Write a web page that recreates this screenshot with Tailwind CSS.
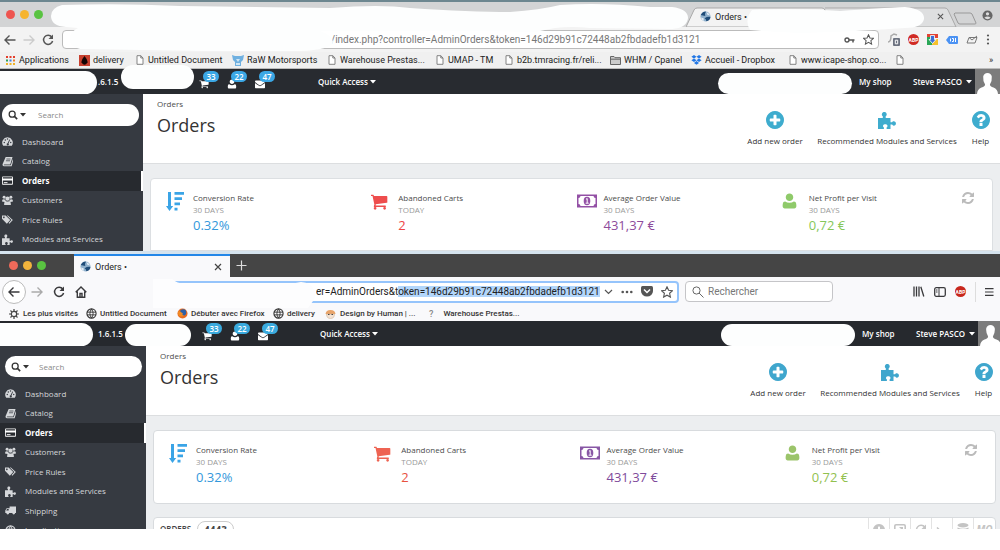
<!DOCTYPE html>
<html lang="en">
<head>
<meta charset="utf-8">
<title>Orders •</title>
<script src="https://cdn.jsdelivr.net/npm/@tailwindcss/browser@4"></script>
</head>
<body class="bg-white font-['Open_Sans','Noto_Sans',sans-serif] text-[8px] leading-3 text-[#4b4b4b]">
<svg class="hidden" aria-hidden="true">
  <symbol id="cart" viewBox="0 0 1792 1792"><path fill="currentColor" d="M704 1536q0 52-38 90t-90 38-90-38-38-90 38-90 90-38 90 38 38 90zm896 0q0 52-38 90t-90 38-90-38-38-90 38-90 90-38 90 38 38 90zm128-1088v512q0 24-16.500 42.500t-40.500 21.500l-1044 122q13 60 13 70 0 16-24 64h920q26 0 45 19t19 45-19 45-45 19h-1024q-26 0-45-19t-19-45q0-11 8-31.500t16-36 21.500-40 15.500-29.500l-177-823h-204q-26 0-45-19t-19-45 19-45 45-19h256q16 0 28.500 6.500t19.500 15.500 13 24.500 8 26 5.500 29.500 4.500 26h1201q26 0 45 19t19 45z"/></symbol>
  <symbol id="user" viewBox="128 64 1536 1664"><path fill="currentColor" d="M1600 1399q0 109-62 187t-150 78h-984q-88 0-150-78t-62-187q0-120 20-230t70-170 170-62q190 150 444 150t444-150q110 0 165 62t75 170 20 230zm-320-887q0 159-112.500 271.500t-271.500 112.500-271.500-112.500-112.500-271.500 112.500-271.500 271.500-112.500 271.500 112.500 112.500 271.500z"/></symbol>
  <symbol id="mail" viewBox="0 0 1792 1792"><path fill="currentColor" d="M1792 710v794q0 66-47 113t-113 47h-1472q-66 0-113-47t-47-113v-794q44 49 101 87 362 246 497 345 57 42 92.500 65.500t94.500 48 110 24.500h2q51 0 110-24.500t94.500-48 92.500-65.500q170-123 498-345 57-39 100-87zm0-294q0 79-49 151t-122 123q-376 261-468 325-10 7-42.500 31t-54 38.500-52 32.500-57.500 27-50 9h-2q-23 0-50-9t-57.500-27-52-32.500-54-38.500-42.500-31q-91-64-262-182.500t-205-142.500q-62-42-117-115.500t-55-136.500q0-78 41.500-130t118.500-52h1472q65 0 112.500 47t47.500 113z"/></symbol>
  <symbol id="plus" viewBox="128 128 1536 1536"><path fill="currentColor" d="M1344 960v-128q0-26-19-45t-45-19h-256v-256q0-26-19-45t-45-19h-128q-26 0-45 19t-19 45v256h-256q-26 0-45 19t-19 45v128q0 26 19 45t45 19h256v256q0 26 19 45t45 19h128q26 0 45-19t19-45v-256h256q26 0 45-19t19-45zm320-64q0 209-103 385.500t-279.500 279.500-385.500 103-385.500-103-279.500-279.500-103-385.500 103-385.500 279.500-279.500 385.500-103 385.500 103 279.500 279.500 103 385.500z"/></symbol>
  <symbol id="help" viewBox="128 128 1536 1536"><path fill="currentColor" d="M1024 1376v-192q0-14-9-23t-23-9h-192q-14 0-23 9t-9 23v192q0 14 9 23t23 9h192q14 0 23-9t9-23zm256-672q0-88-55.500-163t-138.500-116-170-41q-243 0-371 213-15 24 8 42l132 100q7 6 19 6 16 0 25-12 53-68 86-92 34-24 86-24 48 0 85.500 26t37.500 59q0 38-20 61t-68 45q-63 28-115.500 86.500t-52.500 125.500v36q0 14 9 23t23 9h192q14 0 23-9t9-23q0-19 21.500-49.500t54.500-49.500q32-18 49-28.500t46-35 44.500-48 28-60.500 12.500-81zm384 192q0 209-103 385.500t-279.500 279.500-385.500 103-385.500-103-279.500-279.500-103-385.500 103-385.500 279.500-279.500 385.500-103 385.500 103 279.500 279.500 103 385.500z"/></symbol>
  <symbol id="refresh" viewBox="128 128 1536 1536"><path fill="currentColor" d="M1639 1056q0 5-1 7-64 268-268 434.500t-478 166.500q-146 0-282.500-55t-243.500-157l-129 129q-19 19-45 19t-45-19-19-45v-448q0-26 19-45t45-19h448q26 0 45 19t19 45-19 45l-137 137q71 66 161 102t187 36q134 0 250-65t186-179q11-17 53-117 8-23 30-23h192q13 0 22.500 9.500t9.500 22.500zm25-800v448q0 26-19 45t-45 19h-448q-26 0-45-19t-19-45 19-45l138-138q-148-137-349-137-134 0-250 65t-186 179q-11 17-53 117-8 23-30 23h-199q-13 0-22.500-9.500t-9.500-22.500v-7q65-268 270-434.500t480-166.500q146 0 284 55.500t245 156.500l130-129q19-19 45-19t45 19 19 45z"/></symbol>
  <symbol id="puzzle" viewBox="0 0 18 18"><path fill="currentColor" d="M0 7h4.800V5.200C3.600 4.500 3.700 3.500 4 2.700 4.300.300 8.300.300 8.600 2.700c.3.800.2 1.800-.9 2.500V7H12.500v4.200h1.600c.6-1.300 1.700-1.200 2.400-.8 1.900.4 1.900 3.600 0 4-.7.400-1.800.4-2.400-.8h-1.600V18H8.600v-1.400c1-.7 1.100-1.600.7-2.400-.6-1.400-3.500-1.400-4.100 0-.4.8-.3 1.700.7 2.400V18H0z"/></symbol>
  <symbol id="sort" viewBox="0 0 18 19"><path fill="currentColor" d="M2 0h3v14h2.200L3.500 19 0 14h2zM8.500 0H18v2.800H8.500zM8.500 5.300h7.500v2.800H8.500zM8.500 10.500H14v2.800H8.500zM8.500 15.800h3v2.700h-3z"/></symbol>
  <symbol id="money" viewBox="0 0 20 13"><path fill="currentColor" fill-rule="evenodd" d="M0 0h20v13H0zM3.500 1.500Q3.300 3.300 1.500 3.500v6q1.800.2 2 2h13q.2-1.800 2-2v-6q-1.800-.2-2-2z"/><ellipse cx="10" cy="6.500" rx="3.300" ry="4.200" fill="currentColor"/><path d="M9 4.800l1.200-.8v4.500M8.700 8.700h3" stroke="#fff" fill="none"/></symbol>
  <symbol id="dash" viewBox="0 0 12 12"><path fill="currentColor" d="M6 1.500A5.700 5.700 0 0 0 1.300 10.500h9.400A5.700 5.700 0 0 0 6 1.500z"/><g fill="#363a41"><circle cx="2.500" cy="7" r=".8"/><circle cx="3.600" cy="4.300" r=".8"/><circle cx="6" cy="3.200" r=".8"/><circle cx="9.500" cy="7" r=".8"/><path d="M8 3.800l.8.300-1.700 4a1.200 1.200 0 1 1-1-.3z"/></g></symbol>
  <symbol id="book" viewBox="0 0 12 12"><path fill="currentColor" d="M4 1h7.500L9 9.200H2.500q-1 .5 0 1H9.500L12 3q.4 3-1.500 8.200H2Q0 10.500.8 8.500z"/><path d="M4.800 3.300h4.500M4.300 5.200h4.500" stroke="#363a41" stroke-width=".8"/></symbol>
  <symbol id="card" viewBox="0 0 12 10"><path fill="currentColor" fill-rule="evenodd" d="M1 .5h10q1 0 1 1v7q0 1-1 1H1q-1 0-1-1v-7q0-1 1-1zM.9 1.400v1.500h10.200V1.400zM.9 5v3.600h10.200V5z"/><path d="M2 7.300h4" stroke="currentColor"/></symbol>
  <symbol id="group" viewBox="0 0 12 12"><g fill="currentColor"><circle cx="2.300" cy="2.500" r="1.600"/><circle cx="9.700" cy="2.500" r="1.600"/><circle cx="6" cy="4" r="2.300"/><path d="M0 7.200Q0 4.500 1.500 4.500q1.200.8 2 .3Q3.600 6 4.200 6.500L2.800 7.500zM12 7.200q0-2.700-1.500-2.700-1.200.8-2 .3Q8.400 6 7.800 6.500l1.400 1zM2.300 11Q2.300 6.600 4.200 6.600q1.800 1.200 3.600 0 1.900 0 1.900 4.400z"/></g></symbol>
  <symbol id="tags" viewBox="0 0 12 12"><path fill="currentColor" fill-rule="evenodd" d="M0 1.500h4l5 5L5.300 10.500 0 5.200zM2 2.600a.9.900 0 1 0 .1 0z"/><path fill="currentColor" d="M5.200 1.500h1.200l5.400 5L8 10.700l-.8-.8 3-3.400z"/></symbol>
  <symbol id="truck" viewBox="0 0 12 12"><path fill="currentColor" d="M5 1.500h7v7.300h-1a1.500 1.500 0 0 1-3 0H4.500a1.500 1.500 0 0 1-3 0H.3V6l1.500-2.500H5zM1.300 6H4V4.400H2.200z"/></symbol>
  <symbol id="globe" viewBox="0 0 12 12"><circle cx="6" cy="6" r="5" fill="none" stroke="currentColor" stroke-width="1.200"/><path d="M1 4.500h10M1 7.500h10M6 1Q2.500 6 6 11M6 1q3.500 5 0 10" fill="none" stroke="currentColor"/></symbol>
  <symbol id="search" viewBox="0 0 12 12"><circle cx="5" cy="5" r="3.600" fill="none" stroke="currentColor" stroke-width="1.500"/><path d="M7.700 7.700L11 11" stroke="currentColor" stroke-width="1.900"/></symbol>
  <symbol id="caret" viewBox="0 0 6 4"><path fill="currentColor" d="M0 0h6L3 3.600z"/></symbol>
  <symbol id="doc" viewBox="0 0 8 10"><path d="M1 .7h3.800L7 3v6.300H1zM4.800.7V3H7" fill="#fff" stroke="#777" stroke-width=".9"/></symbol>
  <symbol id="site" viewBox="0 0 12 12"><circle cx="6" cy="6" r="5.500" fill="#8fb0cc"/><path d="M.8 4.300Q3 .5 6.500.6 5 3 5.800 5.500 3 5 .8 4.300zM5 8q3-2 6.400-1.500-.7 4-4.500 4.800Q7 9 5 8z" fill="#1f4c78"/><path d="M7 1q3 1 4 4L8 4zM1 7l3 1v3Q1.500 10 1 7z" fill="#e4edf5"/></symbol>
  <symbol id="star" viewBox="0 0 12 12"><path d="M6 .8l1.600 3.500 3.800.4-2.800 2.600.8 3.800L6 9.200l-3.400 1.900.8-3.800L.6 4.700l3.800-.4z" fill="none" stroke="currentColor" stroke-width="1.100"/></symbol>
  <symbol id="reload" viewBox="0 0 12 12"><path d="M9.800 3A4.600 4.600 0 1 0 10.600 7" fill="none" stroke="currentColor" stroke-width="1.500"/><path d="M11 .5v4.500H6.500z" fill="currentColor"/></symbol>
  <symbol id="arrow" viewBox="0 0 12 12"><path d="M11.500 6H1M5.500 1.500L1 6l4.500 4.500" fill="none" stroke="currentColor" stroke-width="1.400"/></symbol>
  <symbol id="close" viewBox="0 0 8 8"><path d="M1 1l6 6M7 1L1 7" stroke="currentColor" stroke-width="1.200"/></symbol>
  <symbol id="avatar" viewBox="0 0 25 25"><path fill="#fff" d="M2 25q.3-5 4.500-6.500 3.500-1 3.600-3-2.300-3.500-1.900-8Q9 4 12.500 4t4.300 3.500q.4 4.500-1.900 8 .1 2 3.600 3Q22.700 20 23 25z"/></symbol>
</svg>

<!-- Chrome window -->
<section class="relative overflow-hidden">
  <div class="relative flex h-[27px] items-center border-t-2 border-[#6d8790] bg-[#d3d4d5] font-[Roboto,sans-serif] text-[9px] text-[#222]">
    <div class="flex gap-[5px] pl-1.5">
      <span class="size-[9px] rounded-full bg-[#ee5550]"></span><span class="size-[9px] rounded-full bg-[#f6b42e]"></span><span class="size-[9px] rounded-full bg-[#59c341]"></span>
    </div>
    <div class="relative ml-auto flex h-full w-[314px] items-center pt-1">
      <svg class="absolute inset-0" width="314" height="25" viewBox="0 0 314 25" fill="none"><path d="M0 25L8 8q1-2 3-2h125q2 0 3 2l8 17z" fill="#f3f3f3" stroke="#a9a9a9"/><path d="M139 6h120q2 0 3 2l8 17h-123" fill="#dedfe0" stroke="#a9a9a9"/><path d="M269 11h15q1 0 2 1l4 9q0 1-1 1h-15q-1 0-2-1l-4-9z" stroke="#999"/></svg>
      <svg class="relative ml-3.5 size-[11px]"><use href="#site"/></svg>
      <span class="relative ml-1">Orders •</span>
      <button class="relative mr-14 ml-auto" aria-label="Close tab"><svg class="size-[7px] text-[#555]"><use href="#close"/></svg></button>
      <svg class="absolute top-2 right-[7px]" width="11" height="11" viewBox="0 0 12 12"><circle cx="6" cy="6" r="5.500" fill="#666"/><circle cx="6" cy="4.200" r="1.800" fill="#ddd"/><path d="M2.500 8.500q3.500-3 7 0Q6 11.500 2.500 8.500z" fill="#ddd"/></svg>
    </div>
  </div>
  <div class="flex h-[25px] items-center bg-[#f3f3f3] text-[#555]">
    <button class="ml-1" aria-label="Back"><svg class="size-3"><use href="#arrow"/></svg></button>
    <button class="ml-[7px] rotate-180 text-[#ccc]" aria-label="Forward"><svg class="size-3"><use href="#arrow"/></svg></button>
    <button class="ml-[7px]" aria-label="Reload"><svg class="size-3"><use href="#reload"/></svg></button>
    <div class="ml-2 flex h-[19px] flex-1 items-center rounded-sm border border-[#bbb] bg-white pr-1">
      <input aria-label="Address" class="h-4 flex-1 bg-transparent pl-[268px] font-[Roboto,sans-serif] text-[10px] text-[#777] outline-none" value="/index.php?controller=AdminOrders&amp;token=146d29b91c72448ab2fbdadefb1d3121">
      <svg class="mr-2" width="11" height="8" viewBox="0 0 11 8"><circle cx="3" cy="4" r="2" fill="none" stroke="#555" stroke-width="1.400"/><path d="M5 4h5.500M9 4v2.500" stroke="#555" stroke-width="1.500"/></svg>
      <svg class="size-[11px]"><use href="#star"/></svg>
    </div>
    <div class="flex w-[121px] items-center gap-2 pl-2">
      <svg width="13" height="13" viewBox="0 0 13 13"><path d="M1 9q3 0 3-6l3-2 3 1" fill="none" stroke="#aaa" stroke-width="1.500"/><rect x="6" y="5" width="7" height="8" rx="1" fill="#6c7280"/><path d="M8.300 7.200h2.400v3.600H8.300z" fill="none" stroke="#fff"/></svg>
      <span class="grid size-[11px] place-items-center rounded-full bg-[#d02b24] font-[Roboto,sans-serif] text-[5px] font-bold text-white">ABP</span>
      <svg width="11" height="11" viewBox="0 0 11 11"><path fill="#e34234" d="M0 0h11v4H0z"/><path fill="#2aa757" d="M0 3h5v8H0z"/><path fill="#f6c12c" d="M5 5h6v6H5z"/><path d="M3.500 1.500h4v4h1.500l-3.500 4-3.500-4h1.500z" fill="#3a6fd8" stroke="#fff" stroke-width=".8"/></svg>
      <svg width="12" height="10" viewBox="0 0 12 10"><path fill="#4b92f3" d="M3 1h8q1 0 1 1v6q0 1-1 1H3L0 5z"/><path d="M4.500 3.500v3M6 3.500h1.500v3H6M9.500 3v4" stroke="#fff" fill="none"/></svg>
      <svg width="12" height="11" viewBox="0 0 12 11"><path d="M3 3.500h8l-2 5.500H1zM3 3.500l3 2.500 5-4" fill="none" stroke="#777"/></svg>
      <svg width="4" height="11" viewBox="0 0 4 11" fill="#555"><circle cx="2" cy="1.500" r="1.100"/><circle cx="2" cy="5.500" r="1.100"/><circle cx="2" cy="9.500" r="1.100"/></svg>
    </div>
  </div>
  <nav class="grid h-[17px] grid-cols-[73px_57px_96px_96px_108px_69px_105px_81px_98px_107px_1fr_18px] items-center border-b border-[#bbb] bg-[#f0f0f0] pl-1.5 font-[Roboto,sans-serif] text-[9px] whitespace-nowrap text-[#222]">
    <a href="#" class="flex items-center gap-1"><svg width="9" height="9" viewBox="0 0 9 9"><path fill="#e33e2b" d="M0 0h2v2H0zM3.500 0h2v2h-2zM7 0h2v2H7z"/><path fill="#f0b428" d="M0 7h2v2H0zM3.500 7h2v2h-2zM7 7h2v2H7z"/><path fill="#2f9e57" d="M0 3.500h2v2H0z"/><path fill="#3f7de0" d="M3.500 3.500h2v2h-2z"/><path fill="#e9832b" d="M7 3.500h2v2H7z"/></svg>Applications</a>
    <a href="#" class="flex items-center gap-[3px]"><svg width="11" height="11" viewBox="0 0 11 11"><path fill="#c8402f" d="M0 0h11v11H0z"/><path d="M5.500 1Q9 5 8.500 7.500 5.500 12 2.500 7.500 2 5 5.500 1z" fill="#150505"/></svg>delivery</a>
    <a href="#" class="flex items-center gap-1"><svg class="h-2.5 w-2"><use href="#doc"/></svg>Untitled Document</a>
    <a href="#" class="flex items-center gap-[3px]"><svg width="12" height="11" viewBox="0 0 12 11"><path fill="#6fb0e0" d="M0 0l3 1h6l3-1-1 5-2 2v4H3V7L1 5z"/><path fill="#cfe6f5" d="M4 4h4L6 7zM4 8h4v2H4z"/></svg>RaW Motorsports</a>
    <a href="#" class="flex items-center gap-1"><svg class="h-2.5 w-2"><use href="#doc"/></svg>Warehouse Prestas...</a>
    <a href="#" class="flex items-center gap-1"><svg class="h-2.5 w-2"><use href="#doc"/></svg>UMAP - TM</a>
    <a href="#" class="flex items-center gap-1"><svg class="h-2.5 w-2"><use href="#doc"/></svg>b2b.tmracing.fr/reli...</a>
    <a href="#" class="flex items-center gap-[3px]"><svg width="11" height="9" viewBox="0 0 11 9"><path d="M.5.5h3.500l1 1.200h5.500v6.800H.5zM.5 3.200h10" fill="#ccc" stroke="#666"/></svg>WHM / Cpanel</a>
    <a href="#" class="flex items-center gap-[3px]"><svg width="11" height="10" viewBox="0 0 11 10"><path fill="#2277e5" d="M3 0l2.500 1.700L3 3.400.4 1.700zM8 0l2.600 1.700L8 3.400 5.500 1.700zM3 3.600l2.500 1.700L3 7 .4 5.300zM8 3.600l2.600 1.700L8 7 5.500 5.300zM5.500 6l2.500 2-2.500 1.700L3 8z"/></svg>Accueil - Dropbox</a>
    <a href="#" class="flex items-center gap-1"><svg class="h-2.5 w-2"><use href="#doc"/></svg>www.icape-shop.co...</a>
    <a href="#" aria-label="Bookmark"><svg class="h-2.5 w-2"><use href="#doc"/></svg></a>
    <button aria-label="More bookmarks">»</button>
  </nav>
  <svg class="pointer-events-none absolute inset-x-0 top-0 h-[60px] w-full" viewBox="0 0 1000 60" preserveAspectRatio="none" fill="#fdfefe"><path d="M62 5Q120 3 180 6L330 8Q380 4 410 8 470 12 510 12 540 10 560 5 600 2 650 7L672 7Q688 9 688 18 687 28 672 29L590 28Q572 26 555 28L535 32 480 31 320 31Q333 36 333 42 331 50 300 51L205 51 80 49Q68 46 70 38 70 32 78 28L66 27Q51 26 51 16 51 8 62 5zM752 10Q800 8 840 11 880 8 905 7 925 9 924 19 922 28 905 28 850 32 800 33 770 32 750 30 744 20 752 10z"/></svg>

  <header class="flex h-[25px] items-center bg-[#282b30] font-semibold text-white">
    <span class="mt-0.5 h-[23px] w-[97px] rounded-r-xl bg-[#fdfefe]"></span>
    <span class="ml-px w-[23px]">.6.1.5</span>
    <span class="relative h-full w-[73px]"><span class="absolute -top-1 h-6 w-full rounded-xl bg-[#fdfefe]"></span></span>
    <button class="relative ml-[5px] h-full w-7" aria-label="Orders"><svg class="mt-1 size-2.5"><use href="#cart"/></svg><span class="absolute top-[2px] left-1 h-[11px] w-4 rounded-full bg-[#3ba7e5] text-center leading-[11px]">33</span></button>
    <button class="relative h-full w-7" aria-label="Customers"><svg class="mt-1 size-2.5"><use href="#user"/></svg><span class="absolute top-[2px] left-1 h-[11px] w-4 rounded-full bg-[#3ba7e5] text-center leading-[11px]">22</span></button>
    <button class="relative h-full w-7" aria-label="Messages"><svg class="mt-1 size-2.5"><use href="#mail"/></svg><span class="absolute top-[2px] left-1 h-[11px] w-4 rounded-full bg-[#3ba7e5] text-center leading-[11px]">47</span></button>
    <button class="ml-[35px] flex items-center gap-[2px]">Quick Access<svg class="h-1 w-1.5"><use href="#caret"/></svg></button>
    <span class="mt-1 ml-auto h-[21px] w-[134px] rounded-xl bg-[#fdfefe]"></span>
    <a href="#" class="ml-[7px] w-[54px]">My shop</a>
    <button class="flex w-[62px] items-center gap-1">Steve PASCO<svg class="h-1 w-1.5"><use href="#caret"/></svg></button>
    <svg class="h-[25px] w-[25px] bg-[#7c7c7c]"><use href="#avatar"/></svg>
  </header>
  <div class="flex h-[157px]">
    <aside class="w-[143px] shrink-0 bg-[#363a41] pt-[10px] text-[#d5d7da]">
      <div class="mr-1 ml-0.5 flex h-[22px] items-center rounded-full bg-white pl-1.5 text-[#333]">
        <button class="flex items-center gap-[2px]" aria-label="Search in"><svg class="size-2.5"><use href="#search"/></svg><svg class="h-1 w-1.5"><use href="#caret"/></svg></button>
        <input aria-label="Search" placeholder="Search" class="ml-3 w-24 outline-none placeholder:text-[#888]">
      </div>
      <nav class="mt-1.5 grid h-[117px] auto-rows-fr">
        <a href="#" class="flex items-center gap-[9px] pl-0.5"><svg class="size-[11px]"><use href="#dash"/></svg>Dashboard</a>
        <a href="#" class="flex items-center gap-[9px] pl-0.5"><svg class="size-[11px]"><use href="#book"/></svg>Catalog</a>
        <a href="#" class="flex items-center gap-[9px] border-r-2 border-white bg-[#272a2f] pl-0.5 font-bold text-white"><svg class="size-[11px]"><use href="#card"/></svg>Orders</a>
        <a href="#" class="flex items-center gap-[9px] pl-0.5"><svg class="size-[11px]"><use href="#group"/></svg>Customers</a>
        <a href="#" class="flex items-center gap-[9px] pl-0.5"><svg class="size-[11px]"><use href="#tags"/></svg>Price Rules</a>
        <a href="#" class="flex items-center gap-[9px] pl-0.5"><svg class="size-[11px]"><use href="#puzzle"/></svg>Modules and Services</a>
      </nav>
    </aside>
    <main class="flex-1 bg-[#eceef0]">
      <div class="flex h-[70px] border-b border-[#dcdee0] bg-white pl-[14px]">
        <div class="pt-1"><p>Orders</p><h1 class="mt-px text-lg leading-7 text-[#333]">Orders</h1></div>
        <div class="ml-auto flex pt-[17px] text-[#333]">
          <a href="#" class="flex w-[62px] flex-col items-center gap-1.5"><svg class="size-[18px] text-[#3eacce]"><use href="#plus"/></svg>Add new order</a>
          <a href="#" class="flex w-[162px] flex-col items-center gap-1.5"><svg class="size-[18px] text-[#3eacce]"><use href="#puzzle"/></svg>Recommended Modules and Services</a>
          <a href="#" class="mr-[7px] flex w-[25px] flex-col items-center gap-1.5"><svg class="size-[18px] text-[#3eacce]"><use href="#help"/></svg>Help</a>
        </div>
      </div>
      <div class="mt-[14px] mr-[7px] ml-[7px] grid h-[73px] grid-cols-4 rounded-t-sm border border-[#dcdfe2] bg-white pr-[11px] pl-[9px] pt-[13px]">
        <div class="flex items-start"><svg class="ml-1.5 h-[19px] w-[27px] text-[#3aa4e6]" viewBox="0 0 27 19"><use href="#sort" width="18" height="19"/></svg><div><p>Conversion Rate</p><p class="text-[#999]">30 DAYS</p><p class="text-[13px] leading-[18px] text-[#3498db]">0.32%</p></div></div>
        <div class="flex items-start"><svg class="ml-1.5 h-[19px] w-[27px] text-[#ee4d4d]" viewBox="0 0 27 19"><use href="#cart" x="-2" width="19" height="19"/></svg><div><p>Abandoned Carts</p><p class="text-[#999]">TODAY</p><p class="text-[13px] leading-[18px] text-[#ee4545]">2</p></div></div>
        <div class="flex items-start"><svg class="ml-1.5 h-[19px] w-[27px] text-[#9350a5]" viewBox="0 0 27 19"><use href="#money" y="2" width="20" height="14"/></svg><div><p>Average Order Value</p><p class="text-[#999]">30 DAYS</p><p class="text-[13px] leading-[18px] text-[#8e4b9b]">431,37 €</p></div></div>
        <div class="flex items-start"><svg class="ml-1.5 h-[19px] w-[27px] text-[#8fca6a]" viewBox="0 0 27 19"><use href="#user" width="15" height="18"/></svg><div><p>Net Profit per Visit</p><p class="text-[#999]">30 DAYS</p><p class="text-[13px] leading-[18px] text-[#86c75a]">0,72 €</p></div><button class="mr-[7px] ml-auto text-[#bbb]" aria-label="Refresh"><svg class="size-3"><use href="#refresh"/></svg></button></div>
      </div>
    </main>
  </div>
</section>

<!-- Firefox window -->
<section class="overflow-hidden border-t-3 border-[#d5e3ee]">
  <div class="flex h-[23px] items-center bg-[#454545]">
    <div class="flex gap-[5px] pl-[9px]">
      <span class="size-[9px] rounded-full bg-[#ee6a5a]"></span><span class="size-[9px] rounded-full bg-[#f3b43c]"></span><span class="size-[9px] rounded-full bg-[#59c341]"></span>
    </div>
    <div class="ml-[28px] flex h-full w-[156px] items-center border-t-2 border-[#2487e8] bg-[#f9f9fb] pl-1.5 font-[Roboto,sans-serif] text-[9px] text-[#222]">
      <svg class="mr-1 size-[11px]"><use href="#site"/></svg>Orders •
      <button class="mr-2 ml-auto" aria-label="Close tab"><svg class="size-2 text-[#444]"><use href="#close"/></svg></button>
    </div>
    <button class="ml-1.5 text-[#ddd]" aria-label="New tab"><svg width="11" height="11" viewBox="0 0 11 11"><path d="M5.500.5v10M.5 5.500h10" stroke="currentColor" stroke-width="1.200"/></svg></button>
  </div>
  <div class="flex h-[29px] items-center bg-[#f9f9fb] text-[#3a3a3c]">
    <button class="ml-0.5 grid size-6 place-items-center rounded-full border border-[#bbb] bg-white" aria-label="Back"><svg class="size-3"><use href="#arrow"/></svg></button>
    <button class="ml-[5px] rotate-180 text-[#aaa]" aria-label="Forward"><svg class="size-3"><use href="#arrow"/></svg></button>
    <button class="ml-[10px]" aria-label="Reload"><svg class="size-3"><use href="#reload"/></svg></button>
    <button class="ml-[10px]" aria-label="Home"><svg width="12" height="12" viewBox="0 0 12 12"><path d="M.7 6.200L6 1l5.300 5.200M2.300 5.500v5.700h7.400V5.500M5 11V7.500h2V11" fill="none" stroke="currentColor" stroke-width="1.400"/></svg></button>
    <div class="relative ml-[68px] flex h-[22px] flex-1 items-center rounded-sm border-2 border-[#95c4fb] bg-white pr-1">
      <svg class="pointer-events-none absolute -top-1 -left-1" width="165" height="30" viewBox="0 0 165 30"><path d="M0 0H19Q25 5 32 4.500H140L148 3Q158 4 160 9 165 15 160 22L155 29H0z" fill="#fdfdfe"/></svg>
      <input id="url" aria-label="Address" class="h-4 w-full min-w-0 flex-1 bg-transparent pl-[159px] font-[Roboto,sans-serif] text-[10px] text-[#222] outline-none selection:bg-[#b2d6fb] selection:text-[#222]" value="er=AdminOrders&amp;token=146d29b91c72448ab2fbdadefb1d3121">
      <div class="flex items-center gap-2 text-[#555]">
        <svg width="9" height="6" viewBox="0 0 9 6"><path d="M1 1l3.500 3.500L8 1" fill="none" stroke="currentColor" stroke-width="1.200"/></svg>
        <svg width="12" height="4" viewBox="0 0 12 4" fill="currentColor"><circle cx="1.700" cy="2" r="1.300"/><circle cx="6" cy="2" r="1.300"/><circle cx="10.300" cy="2" r="1.300"/></svg>
        <svg width="12" height="11" viewBox="0 0 12 11"><path d="M1.500 0h9Q12 0 12 1.500V5a6 5.500 0 0 1-12 0V1.500Q0 0 1.500 0z" fill="currentColor"/><path d="M3 3.500l3 3 3-3" fill="none" stroke="#fff" stroke-width="1.500"/></svg>
        <svg class="size-3"><use href="#star"/></svg>
      </div>
    </div>
    <label class="ml-1.5 flex h-[21px] w-[148px] items-center rounded-sm border border-[#c5c5c8] bg-white pl-1.5"><svg class="mr-1 text-[#666]" width="12" height="12" viewBox="0 0 12 12"><circle cx="4.500" cy="4.500" r="3.600" fill="none" stroke="currentColor"/><path d="M7 7l4.500 4.500" stroke="currentColor"/></svg><input aria-label="Rechercher" placeholder="Rechercher" class="w-28 font-[Roboto,sans-serif] text-[10px] outline-none placeholder:text-[#777]"></label>
    <div class="ml-20 flex items-center gap-[9px] pr-1.5">
      <svg width="12" height="11" viewBox="0 0 12 11"><path d="M1 .5v10M3.500 .5v10M6 .5v10M7.800.8l3 9.700" stroke="currentColor" stroke-width="1.300"/></svg>
      <svg width="12" height="10" viewBox="0 0 12 10"><rect x=".7" y=".7" width="10.600" height="8.600" rx="1.500" fill="none" stroke="currentColor" stroke-width="1.300"/><path d="M5 1v8M2 3h1.500M2 5h1.500" stroke="currentColor"/></svg>
      <span class="grid size-[11px] place-items-center rounded-full bg-[#c8271d] font-[Roboto,sans-serif] text-[5px] font-bold text-white">ABP</span>
      <svg class="border-l border-[#ddd]" width="19" height="20" viewBox="0 0 19 20"><path d="M9.500 6.500h9M9.500 10h9M9.500 13.500h9" stroke="currentColor" stroke-width="1.300"/></svg>
    </div>
  </div>
  <nav class="grid h-[15px] grid-cols-[77px_91px_96px_52px_104px_1fr] items-center bg-[#f9f9fb] pl-[9px] font-[Roboto,sans-serif] text-[8px] font-medium whitespace-nowrap text-[#333]">
    <a href="#" class="flex items-center gap-1"><svg width="10" height="10" viewBox="0 0 10 10"><circle cx="5" cy="5" r="2.700" fill="none" stroke="#444" stroke-width="1.200"/><path d="M5 0v2M5 8v2M0 5h2M8 5h2M1.500 1.500l1.300 1.300M7.200 7.200l1.300 1.300M1.500 8.500l1.300-1.300M7.200 2.800l1.300-1.300" stroke="#444" stroke-width="1.200"/></svg>Les plus visités</a>
    <a href="#" class="flex items-center gap-[3px]"><svg class="size-[11px]"><use href="#globe"/></svg>Untitled Document</a>
    <a href="#" class="flex items-center gap-[3px]"><svg width="11" height="11" viewBox="0 0 12 12"><circle cx="6" cy="6" r="5.500" fill="#e66a1f"/><circle cx="6.700" cy="4.800" r="3.400" fill="#2b5fa8"/><path d="M1 4q2-1 3.500.5L6.500 6Q5 8 8 8.500 4 10.500 1.500 8z" fill="#f08a24"/></svg>Débuter avec Firefox</a>
    <a href="#" class="flex items-center gap-[3px]"><svg class="size-[11px]"><use href="#globe"/></svg>delivery</a>
    <a href="#" class="flex items-center gap-1"><svg width="11" height="10" viewBox="0 0 11 10"><path d="M.5 5Q1 1 5.500 1t5 4z" fill="#e9a46a"/><path d="M1.500 5q0 4.500 4 4.500t4-4.500z" fill="#f3e2d3" stroke="#c9a88a" stroke-width=".5"/><path d="M3 5.500h1.500M6.500 5.500H8" stroke="#444"/></svg>Design by Human | ...</a>
    <a href="#" class="flex items-center gap-2.5"><span class="text-[9px] text-[#888]">?</span>Warehouse Prestas...</a>
  </nav>

  <header class="flex h-[25px] items-center bg-[#26292e] font-semibold text-white">
    <span class="mt-0.5 h-[23px] w-[93px] rounded-r-xl bg-[#fdfefe]"></span>
    <span class="ml-[5px] w-[27px]">1.6.1.5</span>
    <span class="mt-[3px] h-[22px] w-[66px] rounded-xl bg-[#fdfefe]"></span>
    <button class="relative ml-[11px] h-full w-7" aria-label="Orders"><svg class="mt-1 size-2.5"><use href="#cart"/></svg><span class="absolute top-[2px] left-1 h-[11px] w-4 rounded-full bg-[#3aaade] text-center leading-[11px]">33</span></button>
    <button class="relative h-full w-7" aria-label="Customers"><svg class="mt-1 size-2.5"><use href="#user"/></svg><span class="absolute top-[2px] left-1 h-[11px] w-4 rounded-full bg-[#3aaade] text-center leading-[11px]">22</span></button>
    <button class="relative h-full w-7" aria-label="Messages"><svg class="mt-1 size-2.5"><use href="#mail"/></svg><span class="absolute top-[2px] left-1 h-[11px] w-4 rounded-full bg-[#3aaade] text-center leading-[11px]">47</span></button>
    <button class="ml-[34px] flex items-center gap-[2px]">Quick Access<svg class="h-1 w-1.5"><use href="#caret"/></svg></button>
    <span class="mt-[3px] ml-auto h-[22px] w-[134px] rounded-xl bg-[#fdfefe]"></span>
    <a href="#" class="ml-[7px] w-[54px]">My shop</a>
    <button class="flex w-[62px] items-center gap-1">Steve PASCO<svg class="h-1 w-1.5"><use href="#caret"/></svg></button>
    <svg class="h-[25px] w-[22px] bg-[#7c7c7c]" viewBox="0 0 22 25"><use href="#avatar" width="25" height="25"/></svg>
  </header>
  <div class="flex h-[183px] overflow-hidden">
    <aside class="w-[146px] shrink-0 bg-[#363a41] pt-[10px] text-[#d5d7da]">
      <div class="mr-1 ml-[5px] flex h-[21px] items-center rounded-full bg-white pl-1.5 text-[#333]">
        <button class="flex items-center gap-[2px]" aria-label="Search in"><svg class="size-2.5"><use href="#search"/></svg><svg class="h-1 w-1.5"><use href="#caret"/></svg></button>
        <input aria-label="Search" placeholder="Search" class="ml-2.5 w-24 outline-none placeholder:text-[#888]">
      </div>
      <nav class="mt-[7px] grid h-[156px] auto-rows-fr">
        <a href="#" class="flex items-center gap-[9px] pl-[5px]"><svg class="size-[11px]"><use href="#dash"/></svg>Dashboard</a>
        <a href="#" class="flex items-center gap-[9px] pl-[5px]"><svg class="size-[11px]"><use href="#book"/></svg>Catalog</a>
        <a href="#" class="flex items-center gap-[9px] border-r-2 border-white bg-[#272a2f] pl-[5px] font-bold text-white"><svg class="size-[11px]"><use href="#card"/></svg>Orders</a>
        <a href="#" class="flex items-center gap-[9px] pl-[5px]"><svg class="size-[11px]"><use href="#group"/></svg>Customers</a>
        <a href="#" class="flex items-center gap-[9px] pl-[5px]"><svg class="size-[11px]"><use href="#tags"/></svg>Price Rules</a>
        <a href="#" class="flex items-center gap-[9px] pl-[5px]"><svg class="size-[11px]"><use href="#puzzle"/></svg>Modules and Services</a>
        <a href="#" class="flex items-center gap-[9px] pl-[5px]"><svg class="size-[11px]"><use href="#truck"/></svg>Shipping</a>
        <a href="#" class="flex items-center gap-[9px] pl-[5px]"><svg class="size-[11px]"><use href="#globe"/></svg>Localization</a>
      </nav>
    </aside>
    <main class="flex-1 bg-[#eceef0]">
      <div class="flex h-[70px] border-b border-[#dcdee0] bg-white pl-[14px]">
        <div class="pt-1"><p>Orders</p><h1 class="mt-px text-lg leading-7 text-[#333]">Orders</h1></div>
        <div class="ml-auto flex pt-[17px] text-[#333]">
          <a href="#" class="flex w-[62px] flex-col items-center gap-1.5"><svg class="size-[18px] text-[#3fa6cd]"><use href="#plus"/></svg>Add new order</a>
          <a href="#" class="flex w-[162px] flex-col items-center gap-1.5"><svg class="size-[18px] text-[#3fa6cd]"><use href="#puzzle"/></svg>Recommended Modules and Services</a>
          <a href="#" class="mr-1 flex w-[25px] flex-col items-center gap-1.5"><svg class="size-[18px] text-[#3fa6cd]"><use href="#help"/></svg>Help</a>
        </div>
      </div>
      <div class="mt-[14px] mr-1 ml-[7px] grid h-[74px] grid-cols-4 rounded-sm border border-[#d8dbde] bg-white pr-[11px] pl-[9px] pt-[13px]">
        <div class="flex items-start"><svg class="ml-1.5 h-[19px] w-[27px] text-[#3aa4e6]" viewBox="0 0 27 19"><use href="#sort" width="18" height="19"/></svg><div><p>Conversion Rate</p><p class="text-[#999]">30 DAYS</p><p class="text-[13px] leading-[18px] text-[#3498db]">0.32%</p></div></div>
        <div class="flex items-start"><svg class="ml-1.5 h-[19px] w-[27px] text-[#ee6352]" viewBox="0 0 27 19"><use href="#cart" x="-2" width="19" height="19"/></svg><div><p>Abandoned Carts</p><p class="text-[#999]">TODAY</p><p class="text-[13px] leading-[18px] text-[#e8523f]">2</p></div></div>
        <div class="flex items-start"><svg class="ml-1.5 h-[19px] w-[27px] text-[#8857a5]" viewBox="0 0 27 19"><use href="#money" y="2" width="20" height="14"/></svg><div><p>Average Order Value</p><p class="text-[#999]">30 DAYS</p><p class="text-[13px] leading-[18px] text-[#7f4b9b]">431,37 €</p></div></div>
        <div class="flex items-start"><svg class="ml-1.5 h-[19px] w-[27px] text-[#9bc46a]" viewBox="0 0 27 19"><use href="#user" width="15" height="18"/></svg><div><p>Net Profit per Visit</p><p class="text-[#999]">30 DAYS</p><p class="text-[13px] leading-[18px] text-[#92c14f]">0,72 €</p></div><button class="mr-[7px] ml-auto text-[#bbb]" aria-label="Refresh"><svg class="size-3"><use href="#refresh"/></svg></button></div>
      </div>
      <div class="mt-[13px] mr-1 ml-[7px] flex h-8 items-start rounded-sm border border-[#d8dbde] bg-white pl-1.5 text-[#444]">
        <h2 class="mt-[5px] w-[37px] font-semibold">ORDERS</h2>
        <span class="mt-[3px] h-4 w-[37px] rounded-full border border-[#ccc] text-center text-[10px] leading-4 font-bold">4443</span>
        <div class="ml-auto grid h-full grid-cols-6 divide-x divide-[#e3e3e3] border-l border-[#e3e3e3] text-[#c4c4c4]">
          <button class="flex w-[21px] justify-center pt-1.5" aria-label="Add"><svg class="size-3"><use href="#plus"/></svg></button>
          <button class="flex w-[21px] justify-center pt-1.5" aria-label="Export"><svg width="12" height="12" viewBox="0 0 12 12"><path d="M2 .8h8q1.200 0 1.200 1.200v8q0 1.200-1.200 1.200H2Q.8 11.200.8 10V2Q.8.8 2 .8z" fill="none" stroke="currentColor" stroke-width="1.600"/><path d="M5 3h4v4z" fill="currentColor"/></svg></button>
          <button class="flex w-[21px] justify-center pt-1.5" aria-label="Reload list"><svg class="size-3"><use href="#reload"/></svg></button>
          <button class="flex w-[21px] justify-center pt-[9px]" aria-label="Show SQL query"><svg width="12" height="10" viewBox="0 0 12 10"><path d="M1 .5l4 4-4 4M6 9h5" fill="none" stroke="currentColor" stroke-width="1.500"/></svg></button>
          <button class="flex w-[21px] justify-center pt-[5px]" aria-label="Export to SQL Manager"><svg width="12" height="12" viewBox="0 0 12 12" fill="currentColor"><ellipse cx="6" cy="2.300" rx="5.500" ry="2.200"/><path d="M.5 4.500q5.500 2.500 11 0v3q-5.500 2.500-11 0zM.5 8.500q5.500 2.500 11 0v1.500q-5.500 3-11 0z"/></svg></button>
          <button class="flex w-[21px] justify-center pt-[5px] text-[10px] font-bold italic">MO</button>
        </div>
      </div>
    </main>
  </div>
</section>
<script>
  const url = document.getElementById('url');
  url.focus({ preventScroll: true });
  url.setSelectionRange(16, url.value.length);
</script>
</body>
</html>
